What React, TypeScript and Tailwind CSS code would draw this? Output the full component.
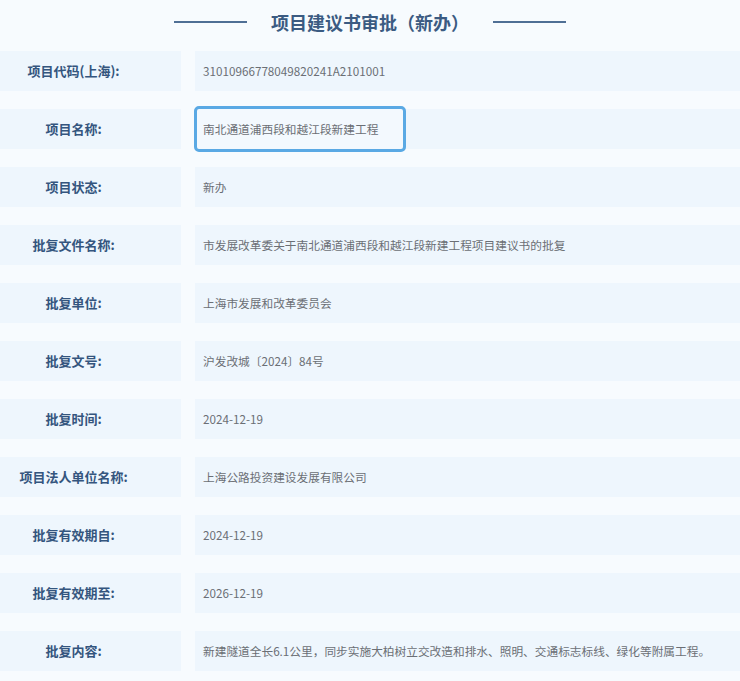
const rows: { label: string; value: string; highlight?: boolean }[] = [
  { label: "项目代码(上海):", value: "31010966778049820241A2101001" },
  { label: "项目名称:", value: "南北通道浦西段和越江段新建工程", highlight: true },
  { label: "项目状态:", value: "新办" },
  { label: "批复文件名称:", value: "市发展改革委关于南北通道浦西段和越江段新建工程项目建议书的批复" },
  { label: "批复单位:", value: "上海市发展和改革委员会" },
  { label: "批复文号:", value: "沪发改城〔2024〕84号" },
  { label: "批复时间:", value: "2024-12-19" },
  { label: "项目法人单位名称:", value: "上海公路投资建设发展有限公司" },
  { label: "批复有效期自:", value: "2024-12-19" },
  { label: "批复有效期至:", value: "2026-12-19" },
  { label: "批复内容:", value: "新建隧道全长6.1公里，同步实施大柏树立交改造和排水、照明、交通标志标线、绿化等附属工程。" },
];

export default function App() {
  return (
    <div
      className="h-[681px] w-[740px] overflow-hidden bg-[#f7fbfe]"
      style={{ fontFamily: '"Noto Sans CJK SC", "Noto Sans", sans-serif' }}
    >
      <div className="flex h-[46px] items-center justify-center gap-[24px] pb-[2px]">
        <span className="h-[2px] w-[73px] bg-[#4f6f95]" />
        <h1 className="text-[18px] font-bold text-[#3b5b82]">项目建议书审批（新办）</h1>
        <span className="h-[2px] w-[73px] bg-[#4f6f95]" />
      </div>
      <div className="mt-[5px] flex flex-col gap-[18px]">
        {rows.map((r) => (
          <div key={r.label} className="flex h-[40px] gap-[14px]">
            <div className="flex w-[181px] shrink-0 items-center justify-center bg-[#eef6fd] pr-[34px] text-[13px] font-bold text-[#34557e]">
              {r.label}
            </div>
            <div className="flex flex-1 items-center bg-[#eef6fd] pl-[8px] text-[11.7px] text-[#6b6f75]">
              {r.highlight ? (
                <div className="-ml-[9px] flex h-[46px] w-[212px] items-center rounded-[5px] border-[3px] border-[#5aa9e4] bg-[#f3f9fe] pl-[6px]">
                  {r.value}
                </div>
              ) : (
                r.value
              )}
            </div>
          </div>
        ))}
      </div>
    </div>
  );
}
